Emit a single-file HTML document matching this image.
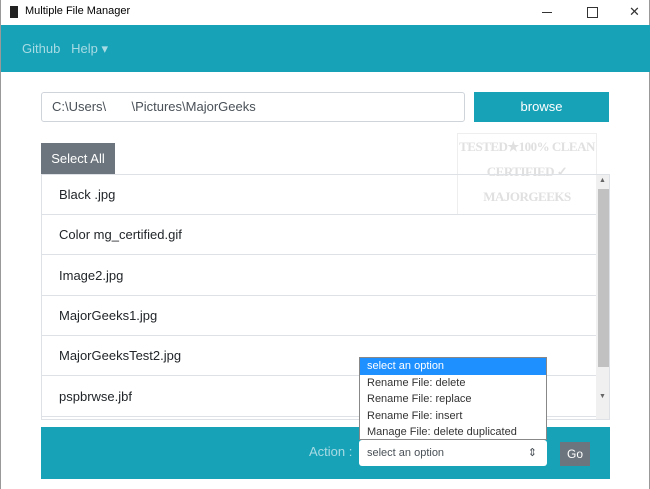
<html><head><style>
body{margin:0;width:650px;height:489px;background:#fff;font-family:"Liberation Sans",sans-serif;position:relative;overflow:hidden;border-left:1px solid #999;border-right:1px solid #999;box-sizing:border-box}
.a{position:absolute}
.row{position:absolute;left:0;width:554px;height:40px;border-bottom:1px solid #dee2e6;font-size:13px;line-height:40px;padding-left:17px;box-sizing:border-box;color:#212529}
.dd div{height:16.5px;line-height:16.5px;padding-left:7px;font-size:11px;color:#333}
</style></head><body>
<div class="a" style="left:9px;top:6px;width:8px;height:12px;background:#222"></div>
<div class="a" style="left:24px;top:5px;font-size:11px;color:#000">Multiple File Manager</div>
<div class="a" style="left:541px;top:12px;width:10px;height:1px;background:#333"></div>
<div class="a" style="left:586px;top:7px;width:9px;height:9px;border:1px solid #333"></div>
<div class="a" style="left:628px;top:4px;font-size:13px;color:#333">✕</div>
<div class="a" style="left:0;top:25px;width:650px;height:47px;background:#17a2b8"></div>
<div class="a" style="left:21px;top:41px;font-size:13px;color:#a8dbe3">Github&nbsp;&nbsp; Help ▾</div>
<div class="a" style="left:40px;top:92px;width:424px;height:30px;border:1px solid #ced4da;border-radius:3px;box-sizing:border-box;font-size:13px;line-height:28px;padding-left:10px;color:#495057">C:\Users\&nbsp;&nbsp;&nbsp;&nbsp;&nbsp;&nbsp;&nbsp;\Pictures\MajorGeeks</div>
<div class="a" style="left:473px;top:92px;width:135px;height:30px;background:#17a2b8;color:#fff;font-size:13px;line-height:30px;text-align:center">browse</div>
<div class="a" style="left:456px;top:133px;width:138px;height:80px;color:#e0e0e0;font:bold 13px 'Liberation Serif',serif;letter-spacing:-0.5px;text-align:center;line-height:25px;white-space:nowrap;border:1px solid #eee;overflow:hidden">TESTED★100% CLEAN<br>CERTIFIED ✓<br>MAJORGEEKS</div>
<div class="a" style="left:40px;top:143px;width:74px;height:31px;background:#6c757d;color:#fff;font-size:13px;line-height:31px;text-align:center">Select All</div>
<div class="a" style="left:40px;top:174px;width:569px;height:246px;border:1px solid #dee2e6;box-sizing:border-box;overflow:hidden">
<div class="row" style="top:0">Black .jpg</div>
<div class="row" style="top:40px">Color mg_certified.gif</div>
<div class="row" style="top:81px">Image2.jpg</div>
<div class="row" style="top:121px">MajorGeeks1.jpg</div>
<div class="row" style="top:161px">MajorGeeksTest2.jpg</div>
<div class="row" style="top:202px">pspbrwse.jbf</div>
<div class="a" style="left:554px;top:0;width:15px;height:246px;background:#f0f0f0"></div>
<div class="a" style="left:557px;top:2px;font-size:7px;color:#666">▲</div>
<div class="a" style="left:557px;top:218px;font-size:7px;color:#666">▼</div>
<div class="a" style="left:556px;top:14px;width:11px;height:178px;background:#c1c1c1"></div>
</div>
<div class="a" style="left:40px;top:427px;width:569px;height:52px;background:#17a2b8"></div>
<div class="a" style="left:308px;top:444px;font-size:13px;color:#a8dbe3">Action :</div>
<div class="a" style="left:358px;top:440px;width:188px;height:26px;background:#fff;border-radius:3px;font-size:11px;line-height:26px;padding-left:8px;box-sizing:border-box;color:#495057">select an option<span style="position:absolute;right:10px">⇕</span></div>
<div class="a" style="left:559px;top:442px;width:30px;height:24px;background:#6c757d;color:#fff;font-size:12px;line-height:24px;text-align:center">Go</div>
<div class="a dd" style="left:358px;top:357px;width:188px;height:83px;background:#fff;border:1px solid #888;box-sizing:border-box">
<div style="background:#1e90ff;color:#fff">select an option</div>
<div>Rename File: delete</div><div>Rename File: replace</div><div>Rename File: insert</div><div>Manage File: delete duplicated</div>
</div>
</body></html>
